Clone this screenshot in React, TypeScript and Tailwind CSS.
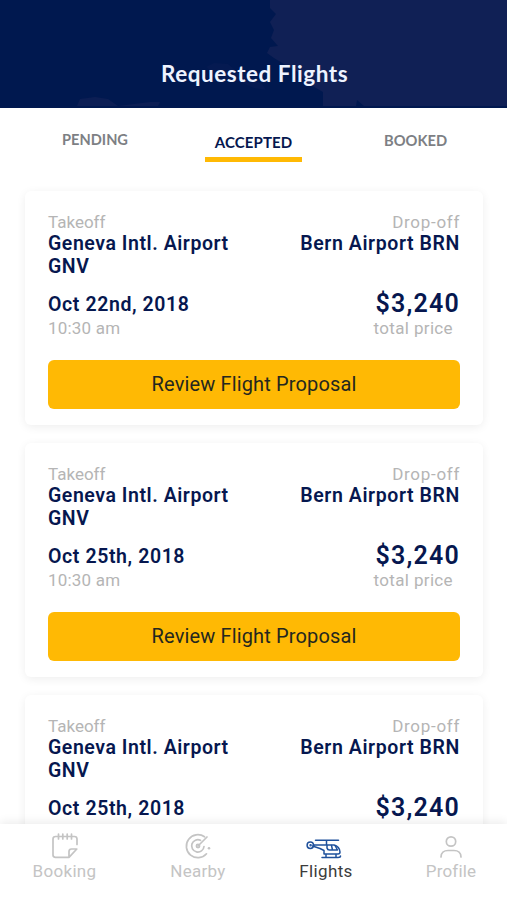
import React from "react";
import clsx from "clsx";

interface Flight {
  id: number;
  from: string;
  to: string;
  date: string;
  time: string;
  price: string;
}

const flights: Flight[] = [
  { id: 1, from: "Geneva Intl. Airport GNV", to: "Bern Airport BRN", date: "Oct 22nd, 2018", time: "10:30 am", price: "$3,240" },
  { id: 2, from: "Geneva Intl. Airport GNV", to: "Bern Airport BRN", date: "Oct 25th, 2018", time: "10:30 am", price: "$3,240" },
  { id: 3, from: "Geneva Intl. Airport GNV", to: "Bern Airport BRN", date: "Oct 25th, 2018", time: "10:30 am", price: "$3,240" },
];

const Header = () => (
  <header className="relative h-[108px] shrink-0 overflow-hidden bg-[#00184f]">
    {/* faint map behind the title */}
    <svg className="absolute inset-0" width="507" height="108" viewBox="0 0 507 108" fill="#102055">
      <path d="M270 0H507V106H364L357 100L356 106H323V92L316 88L306 82L298 72L284 64L274 58L267 53L270 47L278 46L271 38L274 30L270 22L276 14L270 8Z" />
      <path d="M77 106L80 99L95 97L108 99L118 106L150 102L160 102L158 106Z" opacity="0.75" />
      <path d="M206 67L214 63L228 64L240 74L262 84L266 90L254 88L240 82L220 78Z" opacity="0.3" />
    </svg>
    <h1 className="relative pt-[60px] pl-[2px] text-center font-['Lato','Open_Sans',sans-serif] text-[22.5px] leading-[28px] font-bold tracking-[0.53px] text-[#eef3ff]">
      Requested Flights
    </h1>
  </header>
);

const Tabs = () => (
  <nav className="flex h-[83px] shrink-0 pl-[61px] font-['Lato','Open_Sans',sans-serif] text-[15px] leading-[20px] font-bold whitespace-nowrap text-[#7d7f84]">
    <button className="mt-[22px] h-5 w-[68px] text-[14.6px]">PENDING</button>
    <button className="mt-[24px] ml-[76px] h-[30px] w-[97px] border-b-[5px] border-[#ffb904] pb-[5px] text-[#06174f] tracking-[0.1px]">ACCEPTED</button>
    <button className="mt-[22px] ml-[82px] h-5 w-[63px] text-[14.7px]">BOOKED</button>
  </nav>
);

const FlightCard: React.FC<{ flight: Flight }> = ({ flight }) => {
  return (
    <article className="h-[234px] shrink-0 rounded-[6px] bg-white px-[23px] pt-[21px] shadow-[0_2px_10px_rgba(0,0,0,0.07)]">
      <div className="flex h-[80px] justify-between">
        <div className="w-[200px]">
          <p className="text-[17px] leading-[21px] text-[#b5b5b5]">Takeoff</p>
          <p className="-mt-px text-[19.5px] leading-[23px] font-semibold tracking-[0.55px] text-[#06174f]">{flight.from}</p>
        </div>
        <div className="text-right">
          <p className="text-[17px] leading-[21px] tracking-[0.7px] text-[#b5b5b5]">Drop-off</p>
          <p className="-mt-px text-[19.5px] leading-[23px] font-semibold tracking-[0.6px] text-[#06174f]">{flight.to}</p>
        </div>
      </div>
      <div className="flex h-[68px] justify-between">
        <div>
          <p className="pt-px text-[19.5px] leading-[24px] font-semibold tracking-[0.6px] text-[#06174f]">{flight.date}</p>
          <p className="-mt-px text-[17px] leading-[24px] tracking-[0.2px] text-[#b5b5b5]">{flight.time}</p>
        </div>
        <div className="text-right">
          <p className="text-[25px] leading-[24px] font-semibold tracking-[1.2px] text-[#06174f]">{flight.price}</p>
          <p className="pr-[7px] text-[17px] leading-[24px] tracking-[0.35px] text-[#b5b5b5]">total price</p>
        </div>
      </div>
      <button className="h-[49px] w-full rounded-[6px] bg-[#ffb904] pb-[2px] text-[20px] tracking-[0.14px] text-[#24271f]">
        Review Flight Proposal
      </button>
    </article>
  );
};

const BookingIcon = () => (
  <svg width="26" height="26" viewBox="0 0 26 26" fill="none" stroke="currentColor" strokeWidth="1.7" strokeLinecap="round" strokeLinejoin="round">
    <path d="M3.500 3.500Q1 3.500 1 6V22Q1 24.300 3.500 24.300H17L24.800 16H19.500Q17 16 17 18.500V24.300M22.500 3.500Q25 3.500 25 6V11.500M3.500 3.500H22.500" />
    <path d="M6.500 1V6M10.800 1V6M15.200 1V6M19.500 1V6" />
  </svg>
);

const NearbyIcon = () => (
  <svg width="26" height="26" viewBox="0 0 26 26" fill="none" stroke="currentColor" strokeWidth="1.7" strokeLinecap="round">
    <path d="M19.500 3.800A11.500 11.500 0 1 0 21.500 20.800M15.500 7.300A6.200 6.200 0 1 0 19 13.500M13 13L22 4" />
    <circle cx="13" cy="13" r="1.600" />
    <circle cx="24" cy="15.300" r="1.300" fill="currentColor" stroke="none" />
  </svg>
);

const HelicopterIcon = () => (
  <svg width="36" height="20" viewBox="0 0 36 20" fill="none" stroke="currentColor" strokeWidth="1.500" strokeLinecap="round" strokeLinejoin="round">
    <path d="M9.500 1.300H32.500M20.500 1.300V6M8 6H28C31.500 6.500 34 10 34 13Q34 15 32 15H18V11.500L14 9.500L6.500 7" />
    <path d="M21 6.500V9Q21.500 11 23.500 11H26.500L25.500 6.500M26.500 11H31.500L29 6.500" />
    <path d="M16 18.500H32Q34.500 18.500 34.500 17M20 15.500V18.500M30 15.500V18.500" />
    <circle cx="4.300" cy="6.300" r="3.200" />
    <circle cx="4.600" cy="6.300" r="0.500" fill="currentColor" />
  </svg>
);

const ProfileIcon = () => (
  <svg width="24" height="24" viewBox="0 0 24 24" fill="none" stroke="currentColor" strokeWidth="1.700" strokeLinecap="round">
    <circle cx="12" cy="6.500" r="4.700" />
    <path d="M2 22C2 18 5 15.500 9 15.500H15C19 15.500 22 18 22 22" />
  </svg>
);

interface NavItemProps {
  label: string;
  icon: React.ReactNode;
  active?: boolean;
  className?: string;
}

const NavItem: React.FC<NavItemProps> = ({ label, icon, active, className }) => (
  <button className={clsx("flex flex-col items-center text-[17px] leading-[20px] whitespace-nowrap", className)}>
    <span className={clsx("flex h-[28px] items-end justify-center pb-[2px]", active ? "pr-[5px] text-[#1f519c]" : "text-[#c4c4c4]")}>{icon}</span>
    <span className={active ? "text-[#3c3c3c]" : "text-[#c4c4c4]"}>{label}</span>
  </button>
);

const App = () => {
  return (
    <div className="flex h-[900px] w-[507px] flex-col overflow-hidden bg-white font-['Roboto','Liberation_Sans',sans-serif]">
      <Header />
      <Tabs />
      <main className="-mt-4 flex min-h-0 flex-1 flex-col gap-[18px] overflow-hidden pt-4 pr-[24px] pl-[25px]">
        {flights.map((flight) => (
          <FlightCard key={flight.id} flight={flight} />
        ))}
      </main>
      <footer className="relative flex h-[76px] shrink-0 justify-between bg-white pt-[9px] pr-[31px] pl-[32px] shadow-[0_-2px_9px_rgba(0,0,0,0.08)]">
        <NavItem label="Booking" icon={<BookingIcon />} className="w-[65px] tracking-[0.3px]" />
        <NavItem label="Nearby" icon={<NearbyIcon />} className="w-[56px] tracking-[0.3px]" />
        <NavItem label="Flights" icon={<HelicopterIcon />} active className="w-[54px] tracking-[0.35px]" />
        <NavItem label="Profile" icon={<ProfileIcon />} className="w-[50px] tracking-[0.2px]" />
      </footer>
    </div>
  );
};

export default App;
